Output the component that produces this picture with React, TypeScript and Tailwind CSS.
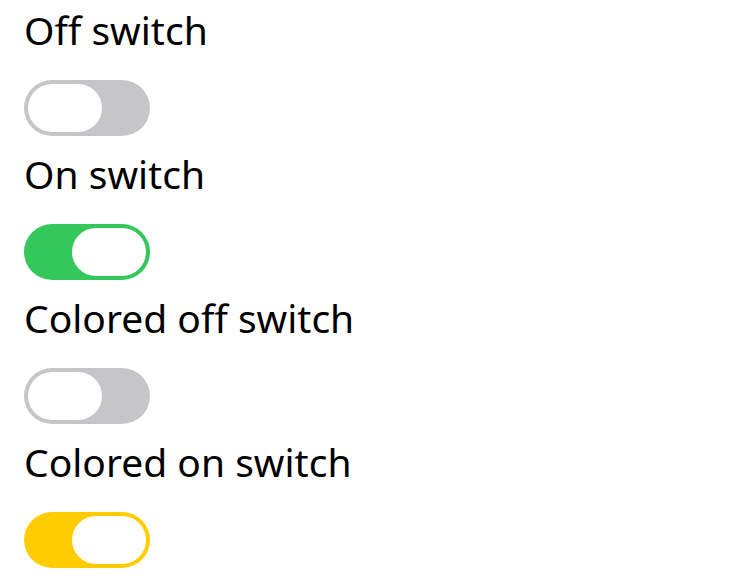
import React from "react";

function Switch({ on, color }: { on: boolean; color: string }) {
  return (
    <div
      className={`w-[126px] h-[56px] rounded-[28px] p-[4px] flex ${on ? "justify-end" : "justify-start"}`}
      style={{ backgroundColor: color }}
    >
      <div className="w-[74px] h-[48px] rounded-[24px] bg-white" />
    </div>
  );
}

export default function App() {
  const items = [
    { label: "Off switch", on: false, color: "#c6c6c8" },
    { label: "On switch", on: true, color: "#34c85a" },
    { label: "Colored off switch", on: false, color: "#c6c6c8" },
    { label: "Colored on switch", on: true, color: "#ffcc00" },
  ];
  return (
    <div className="w-[750px] h-[576px] bg-white px-[24px] text-black" style={{ fontFamily: '"Noto Sans", sans-serif' }}>
      {items.map((it) => (
        <div key={it.label} className="h-[144px] pt-[6px]">
          <div className="h-[48px] text-[39px] leading-[48px] whitespace-nowrap">{it.label}</div>
          <div className="mt-[26px]">
            <Switch on={it.on} color={it.color} />
          </div>
        </div>
      ))}
    </div>
  );
}
